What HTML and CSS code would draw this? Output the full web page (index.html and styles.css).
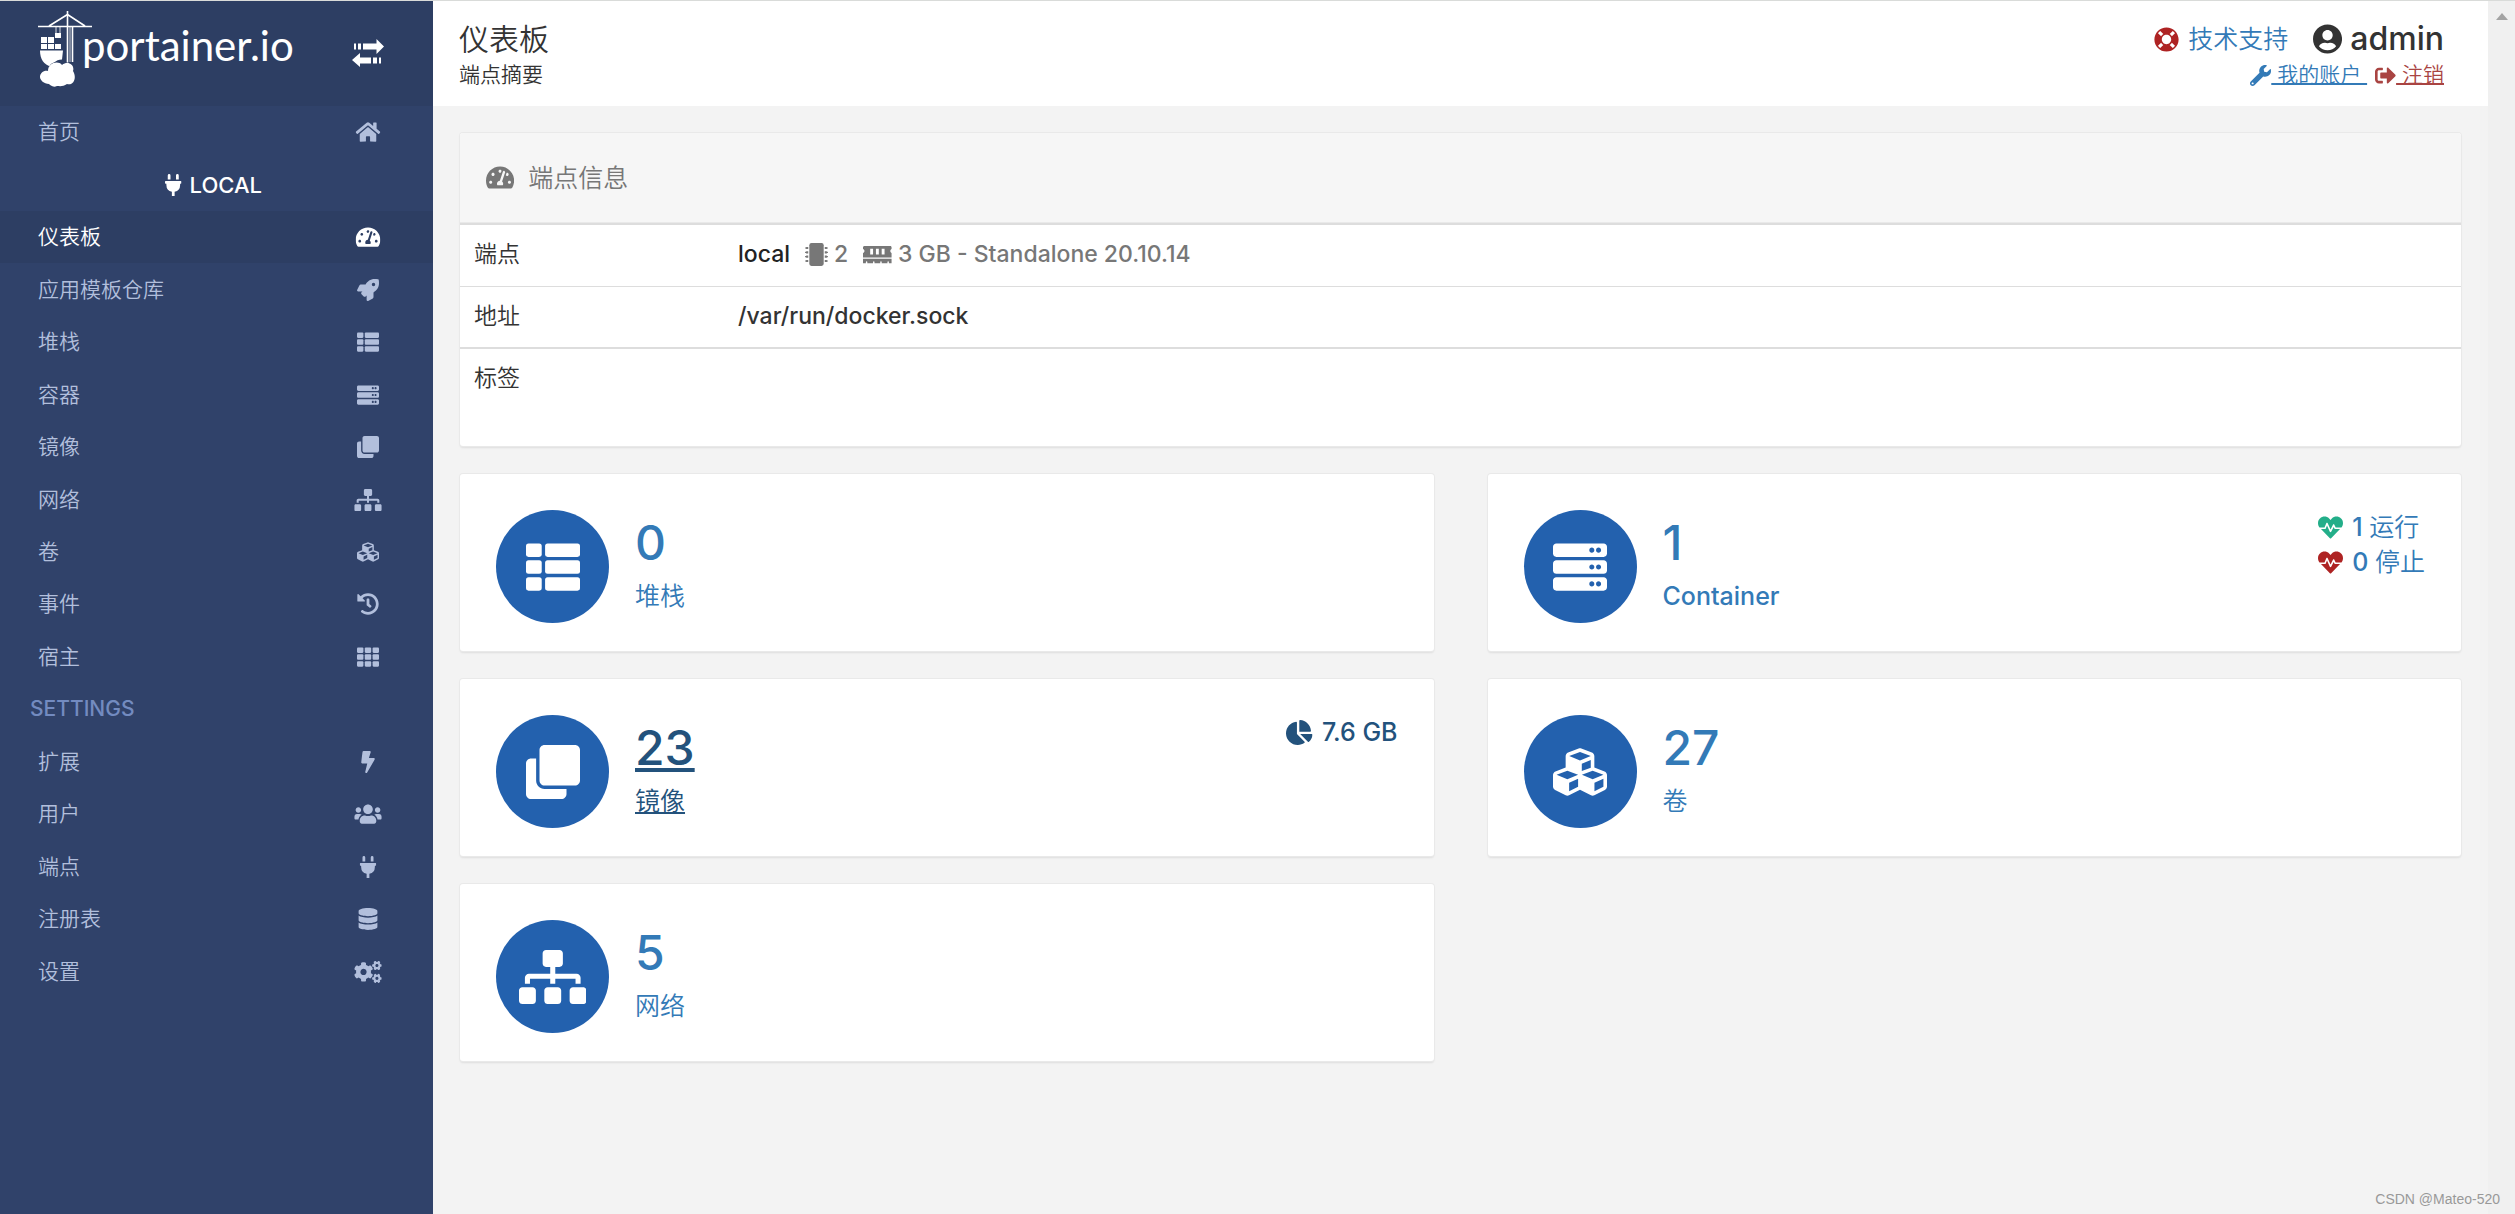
FILE: index.html
```html
<!DOCTYPE html>
<html lang="zh-CN">
<head>
<meta charset="utf-8">
<meta name="viewport" content="width=device-width, initial-scale=1">
<title>Portainer</title>
<link rel="stylesheet" href="styles.css">
</head>
<body>
<svg class="sprite" aria-hidden="true">
  <symbol id="i-home" viewBox="0 0 576 512"><path d="M280.37 148.26L96 300.11V464a16 16 0 0 0 16 16l112.06-.29a16 16 0 0 0 15.92-16V368a16 16 0 0 1 16-16h64a16 16 0 0 1 16 16v95.64a16 16 0 0 0 16 16.05L464 480a16 16 0 0 0 16-16V300L295.67 148.26a12.19 12.19 0 0 0-15.3 0zM571.6 251.47L488 182.56V44.05a12 12 0 0 0-12-12h-56a12 12 0 0 0-12 12v72.61L318.47 43a48 48 0 0 0-61 0L4.34 251.47a12 12 0 0 0-1.6 16.9l25.5 31A12 12 0 0 0 45.15 301l235.22-193.74a12.19 12.19 0 0 1 15.3 0L530.9 301a12 12 0 0 0 16.9-1.6l25.5-31a12 12 0 0 0-1.7-16.93z"/></symbol>
  <symbol id="i-plug" viewBox="0 0 384 512"><path d="M320 32a32 32 0 0 0-64 0v96h64zm48 128H16A16 16 0 0 0 0 176v32a16 16 0 0 0 16 16h16v32a160.07 160.07 0 0 0 128 156.8V512h64v-99.2A160.07 160.07 0 0 0 352 256v-32h16a16 16 0 0 0 16-16v-32a16 16 0 0 0-16-16zM128 32a32 32 0 0 0-64 0v96h64z"/></symbol>
  <symbol id="i-gauge" viewBox="0 0 576 512"><path d="M288 32C128.94 32 0 160.94 0 320c0 52.8 14.25 102.26 39.06 144.8 5.61 9.62 16.3 15.2 27.44 15.2h443c11.14 0 21.83-5.58 27.44-15.2C561.75 422.26 576 372.8 576 320c0-159.06-128.94-288-288-288zm0 64c14.71 0 26.58 10.13 30.32 23.65-1.11 2.26-2.64 4.23-3.45 6.67l-9.22 27.67c-5.13 3.49-10.97 6.01-17.64 6.01-17.67 0-32-14.33-32-32S270.33 96 288 96zM96 384c-17.67 0-32-14.33-32-32s14.33-32 32-32 32 14.33 32 32-14.33 32-32 32zm48-160c-17.67 0-32-14.33-32-32s14.33-32 32-32 32 14.33 32 32-14.33 32-32 32zm246.77-72.41l-61.33 184C343.13 347.33 352 364.54 352 384c0 11.72-3.38 22.55-8.88 32H232.88c-5.5-9.45-8.88-20.28-8.88-32 0-33.94 26.5-61.43 59.9-63.59l61.34-184.01c4.17-12.56 17.73-19.45 30.36-15.17 12.57 4.19 19.35 17.79 15.17 30.36zm14.66 57.2l15.52-46.55c3.47-1.29 7.13-2.23 11.05-2.23 17.67 0 32 14.33 32 32s-14.33 32-32 32c-11.38-.01-20.89-6.28-26.57-15.22zM480 384c-17.67 0-32-14.33-32-32s14.33-32 32-32 32 14.33 32 32-14.33 32-32 32z"/></symbol>
  <symbol id="i-rocket" viewBox="0 0 512 512"><path d="M505.12 19.09c-1.19-5.53-6.66-11-12.21-12.19C460.72 0 435.51 0 410.41 0 307.18 0 245.27 55.2 199.05 128H94.84c-16.35.02-35.56 11.88-42.89 26.48L2.52 253.3A28.4 28.4 0 0 0 0 264a24 24 0 0 0 24 24h103.82l-22.48 22.47c-11.36 11.36-12.99 32.26 0 45.25l50.9 50.9c11.16 11.19 32.16 13.16 45.28 0L224 384.16V488a24 24 0 0 0 24 24 28.56 28.56 0 0 0 10.71-2.52l98.73-49.39c14.63-7.29 26.51-26.5 26.51-42.86V312.8c72.6-46.31 128.03-108.41 128.03-211.1.1-25.2.1-50.4-6.86-82.61zM384.04 168A40 40 0 1 1 424.05 128a40.02 40.02 0 0 1-40.01 40z"/></symbol>
  <symbol id="i-list" viewBox="0 0 512 512"><rect y="32" width="149" height="128" rx="24"/><rect y="192" width="149" height="128" rx="24"/><rect y="352" width="149" height="128" rx="24"/><rect x="181" y="32" width="331" height="128" rx="24"/><rect x="181" y="192" width="331" height="128" rx="24"/><rect x="181" y="352" width="331" height="128" rx="24"/></symbol>
  <symbol id="i-grid" viewBox="0 0 512 512"><rect y="32" width="149" height="128" rx="24"/><rect y="192" width="149" height="128" rx="24"/><rect y="352" width="149" height="128" rx="24"/><rect x="181" y="32" width="149" height="128" rx="24"/><rect x="181" y="192" width="149" height="128" rx="24"/><rect x="181" y="352" width="149" height="128" rx="24"/><rect x="363" y="32" width="149" height="128" rx="24"/><rect x="363" y="192" width="149" height="128" rx="24"/><rect x="363" y="352" width="149" height="128" rx="24"/></symbol>
  <symbol id="i-server" viewBox="0 0 512 512"><path id="rack" d="M480 160H32c-17.673 0-32-14.327-32-32V64c0-17.673 14.327-32 32-32h448c17.673 0 32 14.327 32 32v64c0 17.673-14.327 32-32 32zm-48-88c-13.255 0-24 10.745-24 24s10.745 24 24 24 24-10.745 24-24-10.745-24-24-24zm-64 0c-13.255 0-24 10.745-24 24s10.745 24 24 24 24-10.745 24-24-10.745-24-24-24z"/><use href="#rack" y="160"/><use href="#rack" y="320"/></symbol>
  <symbol id="i-clone" viewBox="0 0 512 512"><path d="M464 0c26.51 0 48 21.49 48 48v288c0 26.51-21.49 48-48 48H176c-26.51 0-48-21.49-48-48V48c0-26.51 21.49-48 48-48h288M176 416c-44.112 0-80-35.888-80-80V128H48c-26.51 0-48 21.49-48 48v288c0 26.51 21.49 48 48 48h288c26.51 0 48-21.49 48-48v-48H176z"/></symbol>
  <symbol id="i-sitemap" viewBox="0 0 640 512"><path d="M128 352H32c-17.67 0-32 14.33-32 32v96c0 17.67 14.33 32 32 32h96c17.67 0 32-14.33 32-32v-96c0-17.67-14.33-32-32-32zm-24-80h192v48h48v-48h192v48h48v-57.59c0-21.17-17.23-38.41-38.41-38.41H344v-64h40c17.67 0 32-14.33 32-32V32c0-17.67-14.33-32-32-32H256c-17.67 0-32 14.33-32 32v96c0 17.67 14.33 32 32 32h40v64H94.41C73.23 224 56 241.23 56 262.41V320h48v-48zm264 80h-96c-17.67 0-32 14.33-32 32v96c0 17.67 14.33 32 32 32h96c17.67 0 32-14.33 32-32v-96c0-17.67-14.33-32-32-32zm240 0h-96c-17.67 0-32 14.33-32 32v96c0 17.67 14.33 32 32 32h96c17.67 0 32-14.33 32-32v-96c0-17.67-14.33-32-32-32z"/></symbol>
  <symbol id="i-cubes" viewBox="0 0 512 512"><path d="M488.6 250.2L392 214V105.5c0-15-9.3-28.4-23.4-33.7l-100-37.5c-8.1-3.1-17.1-3.1-25.3 0l-100 37.5c-14.1 5.3-23.4 18.7-23.4 33.7V214l-96.6 36.2C9.3 255.5 0 268.9 0 283.9V394c0 13.6 7.7 26.1 19.9 32.2l100 50c10.1 5.1 22.1 5.1 32.2 0l103.9-52 103.9 52c10.1 5.1 22.1 5.1 32.2 0l100-50c12.2-6.1 19.9-18.6 19.9-32.2V283.9c0-15-9.3-28.4-23.4-33.7zM358 214.8l-85 31.9v-68.2l85-37v73.3zM154 104.1l102-38.2 102 38.2v.6l-102 41.4-102-41.4v-.6zm84 291.1l-85 42.5v-79.1l85-38.8v75.4zm0-112l-102 41.4-102-41.4v-.6l102-38.2 102 38.2v.6zm240 112l-85 42.5v-79.1l85-38.8v75.4zm0-112l-102 41.4-102-41.4v-.6l102-38.2 102 38.2v.6z"/></symbol>
  <symbol id="i-history" viewBox="0 0 512 512"><path d="M504 255.531c.253 136.64-111.18 248.372-247.82 248.468-59.015.042-113.223-20.53-155.822-54.911-11.077-8.94-11.905-25.541-1.839-35.607l11.267-11.267c8.609-8.609 22.353-9.551 31.891-1.984C173.062 425.135 212.781 440 256 440c101.705 0 184-82.311 184-184 0-101.705-82.311-184-184-184-48.814 0-93.149 18.969-126.068 49.932l50.754 50.754c10.08 10.08 2.941 27.314-11.313 27.314H24c-8.837 0-16-7.163-16-16V38.627c0-14.254 17.234-21.393 27.314-11.314l49.372 49.372C129.209 34.136 189.552 8 256 8c136.81 0 247.747 110.78 248 247.531zm-180.912 78.784l9.823-12.63c8.138-10.463 6.253-25.542-4.21-33.679L288 256.349V152c0-13.255-10.745-24-24-24h-16c-13.255 0-24 10.745-24 24v135.651l65.409 50.874c10.463 8.137 25.541 6.253 33.679-4.21z"/></symbol>
  <symbol id="i-bolt" viewBox="0 0 320 512"><path d="M296 160H180.6l42.6-129.8C227.2 15 215.7 0 200 0H56C44 0 33.8 8.9 32.2 20.8l-32 240C-1.7 275.2 9.5 288 24 288h118.7L96.6 482.5c-3.6 15.2 8 29.5 23.3 29.5 8.4 0 16.4-4.4 20.8-12l176-304c9.3-15.9-2.2-36-20.7-36z"/></symbol>
  <symbol id="i-users" viewBox="0 0 640 512"><path d="M96 224c35.3 0 64-28.7 64-64s-28.7-64-64-64-64 28.7-64 64 28.7 64 64 64zm448 0c35.3 0 64-28.7 64-64s-28.7-64-64-64-64 28.7-64 64 28.7 64 64 64zm32 32h-64c-17.6 0-33.5 7.1-45.1 18.6 40.3 22.1 68.9 62 75.1 109.4h66c17.7 0 32-14.3 32-32v-32c0-35.3-28.7-64-64-64zm-256 0c61.9 0 112-50.1 112-112S381.9 32 320 32 208 82.1 208 144s50.1 112 112 112zm76.8 32h-8.3c-20.8 10-43.9 16-68.5 16s-47.6-6-68.5-16h-8.3C179.6 288 128 339.6 128 403.2V432c0 26.5 21.5 48 48 48h288c26.5 0 48-21.5 48-48v-28.8c0-63.6-51.6-115.2-115.2-115.2zm-223.7-13.4C161.5 263.1 145.6 256 128 256H64c-35.3 0-64 28.7-64 64v32c0 17.7 14.3 32 32 32h65.9c6.3-47.4 34.9-87.3 75.2-109.4z"/></symbol>
  <symbol id="i-database" viewBox="0 0 448 512"><path d="M448 73.143v45.714C448 159.143 347.667 192 224 192S0 159.143 0 118.857V73.143C0 32.857 100.333 0 224 0s224 32.857 224 73.143zM448 176v102.857C448 319.143 347.667 352 224 352S0 319.143 0 278.857V176c48.125 33.143 136.208 48.572 224 48.572S399.874 209.143 448 176zm0 160v102.857C448 479.143 347.667 512 224 512S0 479.143 0 438.857V336c48.125 33.143 136.208 48.572 224 48.572S399.874 369.143 448 336z"/></symbol>
  <symbol id="i-cogs" viewBox="0 0 640 512"><path id="cog" d="M512.1 191l-8.2 14.3c-3 5.3-9.4 7.5-15.1 5.4-11.8-4.4-22.6-10.7-32.1-18.6-4.6-3.8-5.8-10.5-2.8-15.7l8.2-14.3c-6.9-8-12.3-17.3-15.9-27.4h-16.5c-6 0-11.2-4.3-12.2-10.3-2-12-2.1-24.6 0-37.1 1-6 6.2-10.4 12.2-10.4h16.5c3.6-10.1 9-19.4 15.9-27.4l-8.2-14.3c-3-5.2-1.9-11.9 2.8-15.7 9.5-7.9 20.4-14.2 32.1-18.6 5.7-2.1 12.1.1 15.1 5.4l8.2 14.3c10.5-1.9 21.2-1.9 31.7 0L552 6.3c3-5.3 9.4-7.5 15.1-5.4 11.8 4.4 22.6 10.7 32.1 18.6 4.6 3.8 5.8 10.5 2.8 15.7l-8.2 14.3c6.9 8 12.3 17.3 15.9 27.4h16.5c6 0 11.2 4.3 12.2 10.3 2 12 2.1 24.6 0 37.1-1 6-6.2 10.4-12.2 10.4h-16.5c-3.6 10.1-9 19.4-15.9 27.4l8.2 14.3c3 5.2 1.9 11.9-2.8 15.7-9.5 7.9-20.4 14.2-32.1 18.6-5.7 2.1-12.1-.1-15.1-5.4l-8.2-14.3c-10.4 1.9-21.2 1.9-31.7 0zm-10.5-58.8c38.5 29.6 82.4-14.3 52.8-52.8-38.5-29.7-82.4 14.3-52.8 52.8z"/><use href="#cog" y="299"/><path d="M386.3 286.1l33.7 16.8c10.1 5.8 14.5 18.1 10.5 29.1-8.9 24.2-26.4 46.4-42.6 65.8-7.4 8.9-20.2 11.1-30.3 5.3l-29.1-16.8c-16 13.7-34.6 24.6-54.9 31.7v33.6c0 11.6-8.3 21.6-19.7 23.6-24.6 4.2-50.4 4.4-75.9 0-11.5-2-20-11.9-20-23.6V418c-20.3-7.2-38.9-18-54.9-31.7L74 403c-10 5.8-22.9 3.6-30.3-5.3-16.2-19.4-33.3-41.6-42.2-65.7-4-10.9.4-23.2 10.5-29.1l33.3-16.8c-3.9-20.9-3.9-42.4 0-63.4L12 205.8c-10.1-5.8-14.6-18.1-10.5-29 8.9-24.2 26-46.4 42.2-65.8 7.4-8.9 20.2-11.1 30.3-5.3l29.1 16.8c16-13.7 34.6-24.6 54.9-31.7V57.1c0-11.5 8.2-21.5 19.6-23.5 24.6-4.2 50.5-4.4 76-.1 11.5 2 20 11.9 20 23.6v33.6c20.3 7.2 38.9 18 54.9 31.7l29.1-16.8c10-5.8 22.9-3.6 30.3 5.3 16.2 19.4 33.2 41.6 42.1 65.8 4 10.9.1 23.2-10 29.1l-33.7 16.8c3.9 21 3.9 42.5 0 63.5zm-117.6 21.1c59.2-77-28.7-164.9-105.7-105.7-59.2 77 28.7 164.9 105.7 105.7z"/></symbol>
  <symbol id="i-ring" viewBox="0 0 512 512"><path d="M256 8C119.033 8 8 119.033 8 256s111.033 248 248 248 248-111.033 248-248S392.967 8 256 8zm173.696 119.559l-63.399 63.399c-10.987-18.559-26.67-34.252-45.255-45.255l63.399-63.399a218.396 218.396 0 0 1 45.255 45.255zM256 352c-53.019 0-96-42.981-96-96s42.981-96 96-96 96 42.981 96 96-42.981 96-96 96zM127.559 82.304l63.399 63.399c-18.559 10.987-34.252 26.67-45.255 45.255l-63.399-63.399a218.372 218.372 0 0 1 45.255-45.255zM82.304 384.441l63.399-63.399c10.987 18.559 26.67 34.252 45.255 45.255l-63.399 63.399a218.396 218.396 0 0 1-45.255-45.255zm302.137 45.255l-63.399-63.399c18.559-10.987 34.252-26.67 45.255-45.255l63.399 63.399a218.403 218.403 0 0 1-45.255 45.255z"/></symbol>
  <symbol id="i-user" viewBox="0 0 496 512"><path d="M248 8C111 8 0 119 0 256s111 248 248 248 248-111 248-248S385 8 248 8zm0 96c48.6 0 88 39.4 88 88s-39.4 88-88 88-88-39.4-88-88 39.4-88 88-88zm0 344c-58.7 0-111.3-26.6-146.5-68.2 18.8-35.4 55.6-59.8 98.5-59.8 2.4 0 4.8.4 7.1 1.1 13 4.2 26.6 6.9 40.9 6.9 14.3 0 28-2.7 40.9-6.9 2.3-.7 4.7-1.1 7.1-1.1 42.9 0 79.7 24.4 98.5 59.8C359.3 421.4 306.7 448 248 448z"/></symbol>
  <symbol id="i-wrench" viewBox="0 0 512 512"><path d="M507.73 109.1c-2.24-9.03-13.54-12.09-20.12-5.51l-74.36 74.36-67.88-11.31-11.31-67.88 74.36-74.36c6.62-6.62 3.43-17.9-5.66-20.16-47.38-11.74-99.55.91-136.58 37.93-39.64 39.64-50.55 97.1-34.05 147.2L18.74 402.76c-24.99 24.99-24.99 65.51 0 90.5 24.99 24.99 65.51 24.99 90.5 0l213.21-213.21c50.12 16.71 107.47 5.68 147.37-34.22 37.07-37.07 49.7-89.32 37.91-136.73zM64 472c-13.25 0-24-10.75-24-24 0-13.26 10.75-24 24-24s24 10.74 24 24c0 13.25-10.75 24-24 24z"/></symbol>
  <symbol id="i-signout" viewBox="0 0 512 512"><path d="M497 273L329 441c-15 15-41 4.5-41-17v-96H152c-13.3 0-24-10.7-24-24v-96c0-13.3 10.7-24 24-24h136V88c0-21.4 25.9-32 41-17l168 168c9.3 9.4 9.3 24.6 0 34zM192 436v-40c0-6.6-5.4-12-12-12H96c-17.7 0-32-14.3-32-32V160c0-17.7 14.3-32 32-32h84c6.6 0 12-5.4 12-12V76c0-6.6-5.4-12-12-12H96c-53 0-96 43-96 96v192c0 53 43 96 96 96h84c6.6 0 12-5.4 12-12z"/></symbol>
  <symbol id="i-heart" viewBox="0 0 512 512"><path d="M320.2 243.8l-49.7 99.4c-6 12.1-23.4 11.7-28.9-.6l-56.9-126.3-30 71.7H60.6l182.5 186.5c7.1 7.3 18.6 7.3 25.7 0L451.4 288H342.3l-22.1-44.2zM473.7 73.9l-2.4-2.5c-51.5-52.6-135.8-52.6-187.4 0L256 100l-27.9-28.5c-51.5-52.7-135.9-52.7-187.4 0l-2.4 2.4C-10.4 123.7-12.5 203 31 256h102.4l35.9-86.2c5.4-12.9 23.6-13.1 29.4-.4l58.2 129.3 49-97.9c5.9-11.8 22.7-11.8 28.6 0l27.6 55.2H481c43.5-53 41.4-132.3-7.3-182.1z"/></symbol>
  <symbol id="i-pie" viewBox="0 0 544 512"><path d="M527.79 288H290.5l158.03 158.03c6.04 6.04 15.98 6.53 22.19.68 38.7-36.46 65.32-85.61 73.13-140.86 1.34-9.46-6.51-17.85-16.06-17.85zm-15.83-64.8C503.72 103.74 408.26 8.28 288.8.04 279.68-.59 272 7.1 272 16.24V240h223.77c9.14 0 16.82-7.68 16.19-16.8zM224 288V50.71c0-9.55-8.39-17.4-17.84-16.06C86.99 51.49-4.1 155.6.14 280.37 4.5 408.51 114.83 513.59 243.03 511.98c50.4-.63 96.97-16.87 135.26-44.03 7.9-5.6 8.42-17.23 1.57-24.08L224 288z"/></symbol>
  <symbol id="i-chip" viewBox="0 0 512 512"><rect x="96" width="320" height="512" rx="48"/><path id="pins" d="M72 88v48H30a6 6 0 0 1-6-6v-6H6a6 6 0 0 1-6-6v-12a6 6 0 0 1 6-6h18v-6a6 6 0 0 1 6-6zM440 88v48h42a6 6 0 0 0 6-6v-6h18a6 6 0 0 0 6-6v-12a6 6 0 0 0-6-6h-18v-6a6 6 0 0 0-6-6z"/><use href="#pins" y="96"/><use href="#pins" y="192"/><use href="#pins" y="288"/></symbol>
  <symbol id="i-memory" viewBox="0 0 640 512"><path d="M640 130.94V96c0-17.67-14.33-32-32-32H32C14.33 64 0 78.33 0 96v34.94c18.6 6.61 32 24.19 32 45.06s-13.4 38.45-32 45.06V320h640v-98.94c-18.6-6.61-32-24.19-32-45.06s13.4-38.45 32-45.06zM224 256h-64V128h64v128zm128 0h-64V128h64v128zm128 0h-64V128h64v128zM0 448h64v-26.67c0-8.84 7.16-16 16-16s16 7.16 16 16V448h128v-26.67c0-8.84 7.16-16 16-16s16 7.16 16 16V448h128v-26.67c0-8.84 7.16-16 16-16s16 7.16 16 16V448h128v-26.67c0-8.84 7.16-16 16-16s16 7.16 16 16V448h64v-96H0v96z"/></symbol>
</svg>

<div class="app">
  <aside class="sidebar">
    <div class="brand">
      <a class="brand-link" href="#">
        <svg class="crane" viewBox="0 0 54 76" aria-hidden="true">
          <g fill="none" stroke="#fff">
            <path stroke-width="1.6" d="M0 15.5H54M11 15L29.500 3.500 47 15"/>
            <path stroke-width="1.6" d="M29.500 0V52M34.500 16V51"/>
            <path stroke-width="0.8" d="M32 16V51M18 16V23M22 16V23"/>
          </g>
          <g fill="#fff">
            <path d="M17 22h6v5h-6zM3 26h6v6H3zM10 26h6v6h-6zM3 33h6v5H3zM10 33h6v5h-6zM17 33h6v5h-6zM2 39.500h23l-1 9c-7 0-9 5-11 7C6 54 2 48 2 39.500z"/>
            <path stroke="#2d3e63" stroke-width="1" paint-order="stroke" d="M10 60c0-8 10-11 14-6 6-5 13 0 11 6 4 6 1 15-6 13-4 3-8 2-10 2-4 2-7-1-8-2-5 0-9-4-9-7 0-4 4-7 8-6z"/>
          </g>
        </svg>
        <span class="brand-name">portainer.io</span>
      </a>
      <button class="toggle" type="button" aria-label="Toggle sidebar">
        <svg viewBox="0 0 32 28" width="32" height="28" aria-hidden="true"><path fill="#fff" d="M2 4.500h2v6H2zM6 4.500h3v6H6zM11 4.500h13.500V0L32 7.500 24.500 15v-4.500H11zM8 14v4.500h11v6H8V28L0 21zM21 18.500h4v6h-4zM27 18.500h2v6h-2z"/></svg>
      </button>
    </div>
    <nav class="menu" aria-label="Main">
      <a class="item" href="#"><span>首页</span><svg class="icon" viewBox="0 0 576 512"><use href="#i-home"/></svg></a>
      <div class="endpoint"><svg class="icon" viewBox="0 0 384 512"><use href="#i-plug"/></svg><span>LOCAL</span></div>
      <a class="item active" href="#" aria-current="page"><span>仪表板</span><svg class="icon" viewBox="0 0 576 512"><use href="#i-gauge"/></svg></a>
      <a class="item" href="#"><span>应用模板仓库</span><svg class="icon" viewBox="0 0 512 512"><use href="#i-rocket"/></svg></a>
      <a class="item" href="#"><span>堆栈</span><svg class="icon" viewBox="0 0 512 512"><use href="#i-list"/></svg></a>
      <a class="item" href="#"><span>容器</span><svg class="icon" viewBox="0 0 512 512"><use href="#i-server"/></svg></a>
      <a class="item" href="#"><span>镜像</span><svg class="icon" viewBox="0 0 512 512"><use href="#i-clone"/></svg></a>
      <a class="item" href="#"><span>网络</span><svg class="icon" viewBox="0 0 640 512"><use href="#i-sitemap"/></svg></a>
      <a class="item" href="#"><span>卷</span><svg class="icon" viewBox="0 0 512 512"><use href="#i-cubes"/></svg></a>
      <a class="item" href="#"><span>事件</span><svg class="icon" viewBox="0 0 512 512"><use href="#i-history"/></svg></a>
      <a class="item" href="#"><span>宿主</span><svg class="icon" viewBox="0 0 512 512"><use href="#i-grid"/></svg></a>
      <div class="section">SETTINGS</div>
      <a class="item" href="#"><span>扩展</span><svg class="icon" viewBox="0 0 320 512"><use href="#i-bolt"/></svg></a>
      <a class="item" href="#"><span>用户</span><svg class="icon" viewBox="0 0 640 512"><use href="#i-users"/></svg></a>
      <a class="item" href="#"><span>端点</span><svg class="icon" viewBox="0 0 384 512"><use href="#i-plug"/></svg></a>
      <a class="item" href="#"><span>注册表</span><svg class="icon" viewBox="0 0 448 512"><use href="#i-database"/></svg></a>
      <a class="item" href="#"><span>设置</span><svg class="icon" viewBox="0 0 640 512"><use href="#i-cogs"/></svg></a>
    </nav>
  </aside>

  <main class="main">
    <header class="topbar">
      <div>
        <h1 class="title">仪表板</h1>
        <p class="subtitle">端点摘要</p>
      </div>
      <div class="account">
        <div class="account-top">
          <a class="support" href="#"><svg class="icon red" viewBox="0 0 512 512"><use href="#i-ring"/></svg><span>技术支持</span></a>
          <span class="user"><svg class="icon" viewBox="0 0 496 512"><use href="#i-user"/></svg><span>admin</span></span>
        </div>
        <div class="account-links">
          <a class="account-link" href="#"><svg class="icon" viewBox="0 0 512 512"><use href="#i-wrench"/></svg><span class="line">&nbsp;我的账户&nbsp;</span></a>
          <a class="account-link logout" href="#"><svg class="icon" viewBox="0 0 512 512"><use href="#i-signout"/></svg><span class="line">&nbsp;注销</span></a>
        </div>
      </div>
    </header>

    <div class="content">
      <section class="widget">
        <h2 class="widget-title"><svg class="icon" viewBox="0 0 576 512"><use href="#i-gauge"/></svg><span>端点信息</span></h2>
        <table class="info">
          <tr>
            <th scope="row">端点</th>
            <td><div class="facts"><span class="name">local</span><span class="fact"><svg class="icon" viewBox="0 0 512 512"><use href="#i-chip"/></svg>2</span><span class="fact"><svg class="icon" viewBox="0 0 640 512"><use href="#i-memory"/></svg>3 GB - Standalone 20.10.14</span></div></td>
          </tr>
          <tr>
            <th scope="row">地址</th>
            <td>/var/run/docker.sock</td>
          </tr>
          <tr class="tags">
            <th scope="row">标签</th>
            <td></td>
          </tr>
        </table>
      </section>

      <div class="cards">
        <a class="card" href="#">
          <span class="disc"><svg class="icon" viewBox="0 0 512 512"><use href="#i-list"/></svg></span>
          <span class="body"><span class="number">0</span><span class="label">堆栈</span></span>
        </a>
        <a class="card" href="#">
          <span class="disc"><svg class="icon" viewBox="0 0 512 512"><use href="#i-server"/></svg></span>
          <span class="body"><span class="number">1</span><span class="label">Container</span></span>
          <span class="stats">
            <span class="stat"><svg class="icon green" viewBox="0 0 512 512"><use href="#i-heart"/></svg>1 运行</span>
            <span class="stat"><svg class="icon red" viewBox="0 0 512 512"><use href="#i-heart"/></svg>0 停止</span>
          </span>
        </a>
        <a class="card focused" href="#">
          <span class="disc"><svg class="icon" viewBox="0 0 512 512"><use href="#i-clone"/></svg></span>
          <span class="body"><span class="number">23</span><span class="label">镜像</span></span>
          <span class="stats">
            <span class="stat"><svg class="icon" viewBox="0 0 544 512"><use href="#i-pie"/></svg>7.6 GB</span>
          </span>
        </a>
        <a class="card" href="#">
          <span class="disc"><svg class="icon" viewBox="0 0 512 512"><use href="#i-cubes"/></svg></span>
          <span class="body"><span class="number">27</span><span class="label">卷</span></span>
        </a>
        <a class="card" href="#">
          <span class="disc"><svg class="icon" viewBox="0 0 640 512"><use href="#i-sitemap"/></svg></span>
          <span class="body"><span class="number">5</span><span class="label">网络</span></span>
        </a>
      </div>
    </div>
  </main>

  <div class="scrollbar" aria-hidden="true"><span class="arrow"></span></div>
  <div class="watermark">CSDN @Mateo-520</div>
</div>
</body>
</html>
```
FILE: styles.css
```css
* {
  box-sizing: border-box;
}

body {
  margin: 0;
  background: #f3f3f3;
  color: #333;
  font-family: Inter, "Noto Sans CJK SC DemiLight", "Noto Sans CJK SC", sans-serif;
  font-size: 23px;
  font-weight: 500;
  line-height: 32px;
}

a {
  color: #337ab7;
  text-decoration: none;
}

.sprite {
  display: none;
}

.icon {
  display: block;
  flex: none;
  height: 1em;
  fill: currentColor;
}

.red {
  color: #ae2323;
}

.green {
  color: #23ae89;
}

.app {
  position: relative;
  display: flex;
  min-height: 100vh;
  border-top: 1px solid #d9dbd9;
}

/* Sidebar */

.sidebar {
  flex: none;
  width: 433px;
  background: #30426a;
}

.brand {
  display: flex;
  align-items: flex-start;
  justify-content: space-between;
  height: 105px;
  padding: 10px 49px 0 38px;
  background: #2d3e63;
}

.brand-link {
  display: flex;
  color: #fff;
}

.crane {
  width: 54px;
  height: 76px;
}

.brand-name {
  margin: 12px 0 0 -10px;
  font-family: Lato, sans-serif;
  font-size: 42px;
  font-weight: 400;
  line-height: 44px;
}

.toggle {
  margin-top: 28px;
  padding: 0;
  border: 0;
  background: none;
  line-height: 0;
}

.menu {
  display: grid;
  grid-auto-rows: 1fr;
  min-height: 892px;
  font-size: 21px;
}

.item {
  display: flex;
  align-items: center;
  justify-content: space-between;
  padding: 0 51px 0 38px;
  color: #b2bfdc;
  font-weight: 350;
}

.item .icon {
  width: 28px;
  height: 22px;
}

.item.active {
  background: #2d3e63;
  color: #fff;
}

.endpoint {
  display: flex;
  align-items: center;
  justify-content: center;
  gap: 8px;
  padding-right: 6px;
  color: #fff;
  font-size: 22px;
}

.section {
  display: flex;
  align-items: center;
  padding-left: 30px;
  color: #738bc0;
}

/* Top bar */

.main {
  flex: 1;
  min-width: 0;
}

.topbar {
  display: flex;
  justify-content: space-between;
  height: 105px;
  padding: 18px 44px 0 26px;
  background: #fff;
}

.title,
.subtitle {
  margin: 0;
  font-weight: 350;
}

.title {
  font-size: 30px;
  line-height: 40px;
}

.subtitle {
  font-size: 21px;
}

.account-top,
.account-links,
.support,
.user,
.account-link {
  display: flex;
  align-items: center;
  justify-content: flex-end;
}

.account-top {
  gap: 25px;
  height: 40px;
}

.support {
  gap: 9px;
  font-size: 25px;
  font-weight: 350;
}

.user {
  gap: 8px;
  font-size: 32px;
}

.user .icon {
  height: 30px;
}

.account-links {
  gap: 8px;
  font-size: 21px;
  font-weight: 350;
}

.line {
  text-decoration: underline;
  text-decoration-thickness: 2px;
}

.logout {
  color: #a94442;
}

/* Endpoint panel */

.content {
  padding: 27px 27px 40px;
}

.widget,
.card {
  border-radius: 3px;
  background: #fff;
  box-shadow: 0 0 0 1px #e9e9e9, 0 2px 2px #dedede;
}

.widget {
  overflow: hidden;
}

.widget-title {
  display: flex;
  align-items: center;
  gap: 14px;
  height: 90px;
  margin: 0;
  padding: 0 26px;
  border-bottom: 1px solid #e9e9e9;
  background: #f6f6f6;
  color: #777;
  font-size: 25px;
  font-weight: 350;
}

.info {
  width: 100%;
  border-collapse: collapse;
}

.info th,
.info td {
  height: 62px;
  padding: 13px 14px;
  border-top: 1px solid #ddd;
  text-align: left;
  vertical-align: top;
}

.info th {
  width: 264px;
  font-weight: 350;
}

.info tr:first-child > *,
.info .tags > * {
  border-top-width: 2px;
}

.info .tags > * {
  height: 98px;
}

.facts {
  display: flex;
  gap: 15px;
}

.name {
  color: #222;
}

.fact {
  display: flex;
  align-items: center;
  gap: 6px;
  color: #777;
}

/* Resource cards */

.cards {
  display: grid;
  grid-template-columns: repeat(2, 1fr);
  gap: 28px 54px;
  margin-top: 28px;
}

.card {
  display: flex;
  align-items: flex-start;
  height: 177px;
  padding: 36px;
  font-size: 25px;
  line-height: 35px;
}

.disc {
  display: flex;
  align-items: center;
  justify-content: center;
  width: 113px;
  height: 113px;
  border-radius: 50%;
  background: #2361ae;
  color: #fff;
  font-size: 54px;
}

.body {
  flex: 1;
  display: flex;
  flex-direction: column;
  gap: 10px;
  padding: 6px 26px 0;
}

.number {
  font-size: 48px;
  line-height: 54px;
}

.label {
  line-height: 32px;
}

.card.focused {
  color: #23527c;
}

.focused .number,
.focused .label {
  align-self: flex-start;
  text-decoration: underline;
}

.stat {
  display: flex;
  align-items: center;
  gap: 9px;
}

/* Scroll track and watermark */

.scrollbar {
  flex: none;
  width: 27px;
  padding: 12px 0 0 8px;
  background: #f0f0f0;
}

.arrow {
  display: block;
  width: 12px;
  height: 7px;
  background: #a3a3a3;
  clip-path: polygon(50% 0, 100% 100%, 0 100%);
}

.watermark {
  position: absolute;
  right: 15px;
  bottom: 5px;
  color: #999;
  font: 14px/20px "Liberation Sans", sans-serif;
}
```
